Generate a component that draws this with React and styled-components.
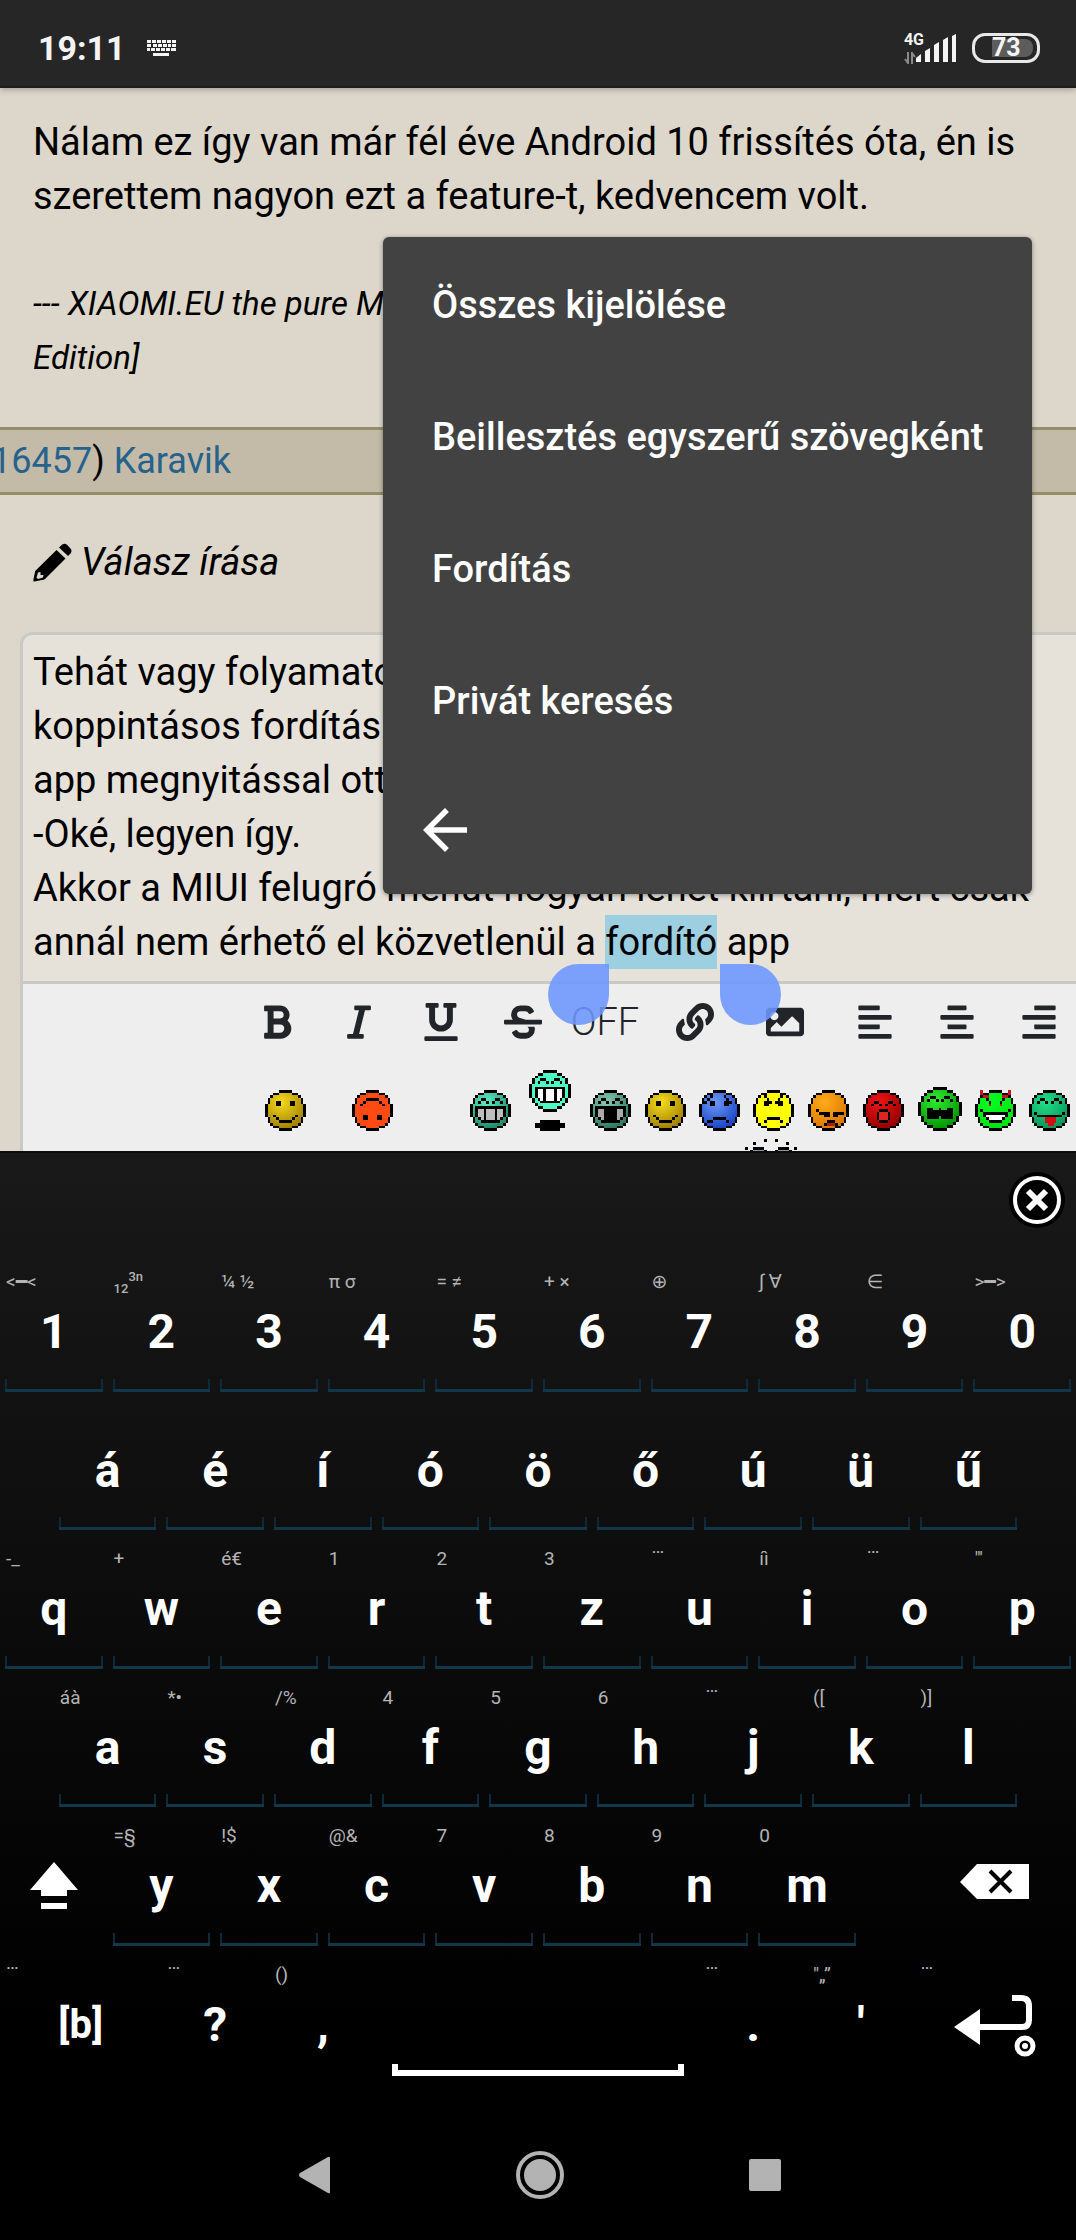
import { useEffect, useRef } from "react"
import styled, { createGlobalStyle } from "styled-components"
import {
  FaAlignCenter,
  FaAlignLeft,
  FaAlignRight,
  FaBold,
  FaImage,
  FaItalic,
  FaLink,
  FaStrikethrough,
  FaUnderline,
} from "react-icons/fa"

const GlobalStyle = createGlobalStyle`
  * {
    box-sizing: border-box;
  }

  body {
    margin: 0;
    background: #000;
    font-family: Roboto, "Noto Sans", "DejaVu Sans", sans-serif;
  }

  button {
    font: inherit;
    color: inherit;
    background: none;
    border: none;
    padding: 0;
  }

  svg {
    display: block;
  }
`

const Screen = styled.div`
  display: flex;
  flex-direction: column;
  min-height: 100vh;
  overflow: hidden;
`

const StatusBar = styled.header`
  display: flex;
  align-items: center;
  justify-content: space-between;
  height: 88px;
  padding: 9px 36px 0 38px;
  color: #f4f4f4;
  background: #262626;
  border-bottom: 2px solid #1c1c1a;
  box-shadow: 0 2px 6px rgba(0, 0, 0, 0.25);
  position: relative;
  z-index: 1;
`

const StatusGroup = styled.div`
  display: flex;
  align-items: center;
  gap: ${({ $gap }) => $gap}px;
`

const Clock = styled.time`
  font-size: 34px;
  font-weight: 700;
  line-height: 40px;
`

const Network = styled.div`
  display: flex;
  flex-direction: column;
  align-items: flex-start;
  gap: 4px;
  margin-right: -8px;
  font-size: 16px;
  font-weight: 700;
  line-height: 16px;
`

const Battery = styled.div`
  display: flex;
  width: 68px;
  height: 30px;
  padding: 3px 4px 3px 17px;
  border: 3px solid #e8e8e8;
  border-radius: 13px;
`

const BatteryLevel = styled.span`
  flex: 1;
  font-size: 25px;
  font-weight: 700;
  line-height: 18px;
  background: #5c5c5c;
  border-radius: 0 8px 8px 0;
`

const Page = styled.main`
  position: relative;
  background: #ddd7cb;
  color: #000;
  font-size: 38px;
  line-height: 54px;
  overflow: hidden;
`

const Post = styled.article`
  padding: 27px 33px 42px;

  p {
    margin: 0;
    white-space: nowrap;
  }
`

const Signature = styled.p`
  padding-top: 54px;
  font-size: 33px;
  font-style: italic;
`

const PostHeader = styled.div`
  padding: 4px 0;
  font-size: 36px;
  text-indent: -9px;
  background: #c3bba7;
  border-top: 3px solid #968d69;
  border-bottom: 3px solid #968d69;

  a {
    color: #27628c;
    text-decoration: none;
  }
`

const ReplyTitle = styled.h2`
  display: flex;
  align-items: center;
  gap: 9px;
  margin: 0;
  padding: 40px 33px 43px;
  font-size: 38px;
  font-style: italic;
  font-weight: 400;
`

const Editor = styled.section`
  position: relative;
  margin: 0 -20px 0 20px;
  background: #e6e2da;
  border: 3px solid #c9c9c5;
  border-bottom: none;
  border-radius: 12px 12px 0 0;
`

const Message = styled.textarea`
  display: block;
  width: 100%;
  padding: 10px 10px 12px;
  font: inherit;
  color: inherit;
  background: none;
  border: none;
  outline: none;
  resize: none;
  overflow: hidden;
  white-space: pre;

  &::selection {
    color: #000;
    background: #9ccfdf;
  }
`

const Handle = styled.span`
  position: absolute;
  z-index: 1;
  top: 329px;
  left: ${({ $left }) => $left}px;
  width: 61px;
  height: 61px;
  background: rgba(108, 150, 255, 0.88);
  border-radius: ${({ $side }) =>
    $side === "start" ? "50% 0 50% 50%" : "0 50% 50% 50%"};
`

const Tools = styled.div`
  height: 170px;
  padding-left: 213px;
  color: #212529;
  background: #eee;
  border-top: 3px solid #c9c9c5;
  overflow: hidden;
`

const Formatting = styled.div`
  display: flex;
  gap: 8px;
  height: 76px;
`

const ToolGroup = styled.div`
  display: flex;
  flex: none;
`

const Tool = styled.button`
  display: flex;
  align-items: center;
  justify-content: center;
  width: 82px;
  font-size: 38px;
`

const OffTool = styled(Tool)`
  font-weight: 300;
`

const Smileys = styled.div`
  display: flex;
  align-items: flex-end;
  height: 71px;
  padding-left: 29px;
`

const SmileyButton = styled.button`
  flex: none;
  margin-left: ${({ $before }) => $before}px;
`

const NextSmileys = styled.div`
  padding: 8px 0 0 509px;
`

const Menu = styled.nav`
  position: absolute;
  top: 149px;
  right: 44px;
  z-index: 2;
  display: flex;
  flex-direction: column;
  width: 649px;
  color: #fff;
  background: #424242;
  border-radius: 6px;
  box-shadow: 0 1px 5px rgba(0, 0, 0, 0.4);
`

const MenuItem = styled.button`
  height: 132px;
  padding: 3px 49px 0;
  font-size: 38px;
  font-weight: 500;
  text-align: left;
  white-space: nowrap;
`

const MenuBack = styled.button`
  height: 129px;
  padding-left: 29px;
`

const Keyboard = styled.section`
  display: flex;
  flex-direction: column;
  padding-bottom: 20px;
  color: #fff;
  background: linear-gradient(#191919, #000 90%);
  border-top: 2px solid #0c0c0c;
`

const KeyboardTop = styled.div`
  display: flex;
  align-items: flex-start;
  justify-content: flex-end;
  height: 106px;
  padding: 19px 11px 0 0;
`

const Rows = styled.div`
  display: grid;
  grid-auto-rows: 1fr;
  height: 831px;
`

// 20 half-key columns, so staggered rows can start on a half key
const Row = styled.div`
  display: grid;
  grid-template-columns: repeat(20, minmax(0, 1fr));
`

const Key = styled.button`
  position: relative;
  grid-column: ${({ $start, $span }) => `${$start} / span ${$span}`};
  display: flex;
  flex-direction: column;
  margin: 0 5px 6px;
  padding: 11px 1px 0;
  border-bottom: 3px solid ${({ $plain }) => ($plain ? "transparent" : "#12374b")};

  &::before {
    content: "";
    position: absolute;
    inset: auto 0 0;
    height: 10px;
    border: solid ${({ $plain }) => ($plain ? "transparent" : "#0d2a3a")};
    border-width: 0 2px;
  }
`

const Hint = styled.span`
  height: 24px;
  margin-bottom: 10px;
  color: #b4b4b4;
  font-size: 19px;
  line-height: 24px;
  text-align: left;
  white-space: nowrap;

  sub,
  sup {
    font-size: 13px;
    font-weight: 500;
    line-height: 0;
  }
`

const Dots = styled.span`
  line-height: 0;
  vertical-align: 12px;
`

const Label = styled.span`
  display: flex;
  align-items: center;
  justify-content: center;
  height: 56px;
  font-size: ${({ $small }) => ($small ? 40 : 48)}px;
  font-weight: 700;
  line-height: 56px;
`

const SpaceMark = styled.span`
  height: 12px;
  margin: auto 9px 5px;
  border: solid #fff;
  border-width: 0 6px;
  background: linear-gradient(#fff, #fff) bottom / 100% 6px no-repeat;
`

const NavBar = styled.nav`
  display: flex;
  flex: 1;
  align-items: center;
  justify-content: center;
  min-height: 129px;
  padding-left: 4px;
  background: #000;
`

const NavButton = styled.button`
  display: flex;
  justify-content: center;
  width: 225px;
`

const message = `Tehát vagy folyamatosan
koppintásos fordítás
app megnyitással ott
-Oké, legyen így.
Akkor a MIUI felugró menüt hogyan lehet kiirtani, mert csak
annál nem érhető el közvetlenül a fordító app`

const menuItems = [
  "Összes kijelölése",
  "Beillesztés egyszerű szövegként",
  "Fordítás",
  "Privát keresés",
]

const dots = <Dots>…</Dots>

const keyRows = [
  {
    start: 1,
    keys: [
      ["1", "<━<"],
      ["2", <><sub>12</sub><sup>3n</sup></>],
      ["3", "¼ ½"],
      ["4", "π σ"],
      ["5", "= ≠"],
      ["6", "+ ×"],
      ["7", "⊕"],
      ["8", "∫ ∀"],
      ["9", "∈"],
      ["0", ">━>"],
    ],
  },
  {
    start: 2,
    keys: [..."áéíóöőúüű"].map((letter) => [letter, ""]),
  },
  {
    start: 1,
    keys: [
      ["q", "-_"],
      ["w", "+"],
      ["e", "é€"],
      ["r", "1"],
      ["t", "2"],
      ["z", "3"],
      ["u", dots],
      ["i", "íì"],
      ["o", dots],
      ["p", "\"'"],
    ],
  },
  {
    start: 2,
    keys: [
      ["a", "áà"],
      ["s", "*•"],
      ["d", "/%"],
      ["f", "4"],
      ["g", "5"],
      ["h", "6"],
      ["j", dots],
      ["k", "(["],
      ["l", ")]"],
    ],
  },
]

const bottomLetters = [
  ["y", "=§"],
  ["x", "!$"],
  ["c", "@&"],
  ["v", "7"],
  ["b", "8"],
  ["n", "9"],
  ["m", "0"],
]

const rects = (list) =>
  list.map(([x, y, w = 1, h = 1]) => `M${x} ${y}h${w}v${h}h${-w}z`).join("")

const DISC =
  "M5 0h5v1h2v1h1v1h1v2h1v5h-1v2h-1v1h-1v1h-2v1h-5v-1h-2v-1h-1v-1h-1v-2h-1v-5h1v-2h1v-1h1v-1h2z"

const RIM = rects([
  [5, 0, 5], [3, 1, 2], [10, 1, 2], [2, 2], [12, 2], [1, 3, 1, 2], [13, 3, 1, 2],
  [0, 5, 1, 5], [14, 5, 1, 5], [1, 10, 1, 2], [13, 10, 1, 2], [2, 12], [12, 12],
  [3, 13, 2], [10, 13, 2], [5, 14, 5],
])

const arches = [[3, 4], [4, 3, 2], [6, 4], [8, 4], [9, 3, 2], [11, 4]]
const eyes = [[4, 4, 2, 2], [9, 4, 2, 2]]
const frown = [[4, 11], [5, 10, 5], [10, 11]]
const grin = [[2, 6, 11], [2, 7, 1, 3], [12, 7, 1, 3], [3, 10], [11, 10], [4, 11, 7], [5, 7, 1, 4], [9, 7, 1, 4]]
const teeth = [[3, 7, 9, 3], [4, 10, 7]]
const smile = [...eyes, [3, 9], [11, 9], [4, 10], [10, 10], [5, 11, 5]]

const smileys = [
  { name: "mosoly", before: 0, from: "#f5dc1c", to: "#9c7a00", marks: smile },
  {
    name: "fejjel lefelé",
    before: 46,
    from: "#ff4a14",
    to: "#ff4a14",
    marks: [[3, 5], [4, 4], [5, 3, 5], [10, 4], [11, 5], [4, 9, 2, 2], [9, 9, 2, 2]],
  },
  {
    name: "vigyor",
    before: 77,
    from: "#5cf0c4",
    to: "#1c8064",
    marks: [...arches, ...grin],
    extras: [["#bdbdbd", teeth]],
  },
  { name: "ugráló", before: 18, jump: true },
  {
    name: "fogatlan",
    before: 19,
    from: "#8cc8b4",
    to: "#24745c",
    marks: [...arches, ...grin, [6, 7, 3, 4]],
    extras: [["#aaa", teeth]],
  },
  { name: "mosoly 2", before: 14, from: "#f5dc1c", to: "#9c7a00", marks: smile },
  {
    name: "szomorú",
    before: 13,
    from: "#6c98f4",
    to: "#1440c4",
    marks: [...eyes, ...frown, [2, 4], [3, 3], [4, 2], [3, 11], [9, 2], [10, 3], [11, 4]],
  },
  {
    name: "mérges",
    before: 13,
    from: "#ff0",
    to: "#ff0",
    marks: [...eyes, ...frown, [4, 2], [5, 3], [6, 4], [10, 2], [9, 3], [8, 4]],
  },
  {
    name: "morcos",
    before: 14,
    from: "#ffac18",
    to: "#d87400",
    marks: [[3, 7], [4, 8, 4], [6, 9, 2], [9, 8, 4], [9, 9, 2], [7, 11, 3], [6, 12], [10, 12]],
    extras: [["#b02000", [[7, 12, 3]]]],
  },
  {
    name: "dühös",
    before: 14,
    from: "#f01414",
    to: "#900000",
    marks: [[3, 5], [4, 4, 2], [6, 5], [8, 5], [9, 4, 2], [11, 5], [6, 7, 3], [5, 8, 1, 3], [9, 8, 1, 3], [6, 11, 3]],
    extras: [["#e02424", [[6, 8, 3, 3]]]],
  },
  {
    name: "ordító",
    before: 14,
    size: 44,
    from: "#30ec30",
    to: "#009000",
    marks: [...arches, [3, 7, 2, 4], [5, 8, 2, 3], [7, 7, 1, 3], [8, 8, 2, 3], [10, 7, 2, 4]],
  },
  {
    name: "ördög",
    before: 13,
    from: "#0f2",
    to: "#00e010",
    marks: [[2, 7], [3, 8, 9], [12, 7], [3, 9], [11, 9], [4, 10], [10, 10], [5, 11, 5], [4, 3], [5, 4], [10, 3], [9, 4]],
    extras: [
      ["#fff", [[4, 9, 7], [5, 10, 5]]],
      ["#c81428", [[2, 0, 1, 3], [3, 2, 2, 1], [12, 0, 1, 3], [10, 2, 2, 1], [5, 5, 1, 1], [9, 5, 1, 1]]],
    ],
  },
  {
    name: "nyelvnyújtó",
    before: 13,
    from: "#20e088",
    to: "#089058",
    marks: [...arches, [2, 8], [3, 9, 9], [12, 8]],
    extras: [["#d01010", [[6, 10, 4, 2], [7, 12, 2]]]],
  },
]

function Face({ smiley, id }) {
  const { from, to, marks, extras = [] } = smiley
  return (
    <>
      <radialGradient id={id} cx="0.4" cy="0.3" r="0.7">
        <stop offset="0" stopColor={from} />
        <stop offset="1" stopColor={to} />
      </radialGradient>
      <path d={DISC} fill={`url(#${id})`} />
      {extras.map(([fill, list]) => (
        <path key={fill} d={rects(list)} fill={fill} />
      ))}
      <path d={RIM + rects(marks)} />
    </>
  )
}

function Smiley({ smiley, id }) {
  if (smiley.jump) {
    const face = {
      from: "#4dfcc4",
      to: "#4dfcc4",
      marks: [...arches, ...grin],
      extras: [["#fff", teeth]],
    }
    return (
      <svg width="42" height="61" viewBox="0 0 15 22" shapeRendering="crispEdges">
        <Face smiley={face} id={id} />
        <path d="M4 18h7v1h2v2h-2v1h-7v-1h-2v-2h2z" />
      </svg>
    )
  }
  const size = smiley.size || 41
  return (
    <svg width={size} height={size} viewBox="0 0 15 15" shapeRendering="crispEdges">
      <Face smiley={smiley} id={id} />
    </svg>
  )
}

function KeyboardIcon() {
  return (
    <svg width="30" height="18" viewBox="0 0 30 18" fill="#f4f4f4">
      <path d="M0 1h4v3h-4zM5 1h4v3h-4zM10 1h4v3h-4zM15 1h4v3h-4zM20 1h4v3h-4zM25 1h4v3h-4zM0 5h4v3h-4zM6 5h4v3h-4zM11 5h4v3h-4zM16 5h4v3h-4zM21 5h3v3h-3zM25 5h4v3h-4zM0 9h3v3h-3zM4 9h4v3h-4zM9 9h4v3h-4zM14 9h4v3h-4zM19 9h4v3h-4zM24 9h5v3h-5zM6 14h16v3h-16z" />
    </svg>
  )
}

function PencilIcon() {
  return (
    <svg width="39" height="39" viewBox="0 0 39 39">
      <path d="M26 4.500L29 1.800q2.500-2 5 0L37.500 5.500q2 2.500 0 5L35 13z" />
      <path
        fillRule="evenodd"
        d="M23.500 7L32.500 15.500L11.500 36.500L1.500 38.500q-1.500 0-1.200-1.500L2.200 28zM5 29.500L3.500 34.500l1.500 1.500 5-1.500.5-2.500h-3v-3z"
      />
    </svg>
  )
}

function LetterKey({ label, hint, start }) {
  return (
    <Key $start={start} $span={2}>
      <Hint>{hint}</Hint>
      <Label>{label}</Label>
    </Key>
  )
}

export default function App() {
  const messageRef = useRef(null)

  useEffect(() => {
    const start = message.indexOf("fordító")
    messageRef.current.focus({ preventScroll: true })
    messageRef.current.setSelectionRange(start, start + "fordító".length)
  }, [])

  return (
    <Screen>
      <GlobalStyle />
      <StatusBar>
        <StatusGroup $gap={21}>
          <Clock>19:11</Clock>
          <KeyboardIcon />
        </StatusGroup>
        <StatusGroup $gap={15}>
          <StatusGroup $gap={0}>
            <Network>
              4G
              <svg width="12" height="12" viewBox="0 0 12 12" fill="none" stroke="#8a8a8a" strokeWidth="2">
                <path d="M4 0v11L1 7M8 12V1l3 4" />
              </svg>
            </Network>
            <svg width="41" height="30" viewBox="0 0 41 30" fill="#f4f4f4">
              <path d="M0 29v-4l5-4v8zM9 29V18l5-3v14zM18 29V12l5-3v20zM27 29V7l5-3v25zM36 29V3l4-2v28z" />
            </svg>
          </StatusGroup>
          <Battery>
            <BatteryLevel>73</BatteryLevel>
          </Battery>
        </StatusGroup>
      </StatusBar>

      <Page>
        <Post>
          <p>Nálam ez így van már fél éve Android 10 frissítés óta, én is</p>
          <p>szerettem nagyon ezt a feature-t, kedvencem volt.</p>
          <Signature>
            --- XIAOMI.EU the pure MIUI
            <br />
            Edition]
          </Signature>
        </Post>
        <PostHeader>
          <a href="#16457">16457</a>) <a href="#karavik">Karavik</a>
        </PostHeader>
        <ReplyTitle>
          <PencilIcon />
          Válasz írása
        </ReplyTitle>

        <Editor>
          <Message
            ref={messageRef}
            rows={6}
            defaultValue={message}
            aria-label="Válasz írása"
            spellCheck={false}
          />
          <Handle $side="start" $left={525} />
          <Handle $side="end" $left={697} />
          <Tools>
            <Formatting>
              <ToolGroup>
                <Tool aria-label="Félkövér"><FaBold /></Tool>
                <Tool aria-label="Dőlt"><FaItalic /></Tool>
                <Tool aria-label="Aláhúzott"><FaUnderline /></Tool>
                <Tool aria-label="Áthúzott"><FaStrikethrough /></Tool>
                <OffTool>OFF</OffTool>
              </ToolGroup>
              <Tool aria-label="Link"><FaLink /></Tool>
              <Tool aria-label="Kép"><FaImage /></Tool>
              <ToolGroup>
                <Tool aria-label="Balra"><FaAlignLeft /></Tool>
                <Tool aria-label="Középre"><FaAlignCenter /></Tool>
                <Tool aria-label="Jobbra"><FaAlignRight /></Tool>
              </ToolGroup>
            </Formatting>
            <Smileys>
              {smileys.map((smiley, i) => (
                <SmileyButton key={smiley.name} $before={smiley.before} aria-label={smiley.name}>
                  <Smiley smiley={smiley} id={`smiley-${i}`} />
                </SmileyButton>
              ))}
            </Smileys>
            <NextSmileys>
              <svg width="52" height="14" viewBox="0 0 19 5" shapeRendering="crispEdges">
                <path fill="#7f9aa8" d="M3 4h4v1h-4zM12 4h4v1h-4z" />
                <path d={rects([[0, 3], [3, 1], [7, 0], [11, 0], [15, 1], [18, 3], [3, 3, 4], [12, 3, 4], [2, 4], [7, 4], [11, 4], [16, 4]])} />
              </svg>
            </NextSmileys>
          </Tools>
        </Editor>

        <Menu>
          {menuItems.map((item) => (
            <MenuItem key={item}>{item}</MenuItem>
          ))}
          <MenuBack aria-label="Vissza">
            <svg width="66" height="66" viewBox="0 0 24 24" fill="#fff">
              <path d="M20 11H7.83l5.59-5.59L12 4l-8 8 8 8 1.41-1.41L7.83 13H20z" />
            </svg>
          </MenuBack>
        </Menu>
      </Page>

      <Keyboard>
        <KeyboardTop>
          <button aria-label="Bezárás">
            <svg width="56" height="56" viewBox="0 0 56 56" fill="none" stroke="#fff">
              <circle cx="28" cy="28" r="28" fill="#000" stroke="none" />
              <circle cx="28" cy="28" r="22" strokeWidth="4" />
              <path d="M19 19l18 18M37 19L19 37" strokeWidth="6" />
            </svg>
          </button>
        </KeyboardTop>
        <Rows>
          {keyRows.map(({ start, keys }, i) => (
            <Row key={i}>
              {keys.map(([label, hint], n) => (
                <LetterKey key={label} label={label} hint={hint} start={start + n * 2} />
              ))}
            </Row>
          ))}
          <Row>
            <Key $start={1} $span={2} $plain aria-label="Shift">
              <Hint />
              <Label>
                <svg width="48" height="48" viewBox="0 0 48 48" fill="#fff">
                  <path d="M24 0l24 28H37v6H11v-6H0zM11 41h26v6H11z" />
                </svg>
              </Label>
            </Key>
            {bottomLetters.map(([label, hint], n) => (
              <LetterKey key={label} label={label} hint={hint} start={3 + n * 2} />
            ))}
            <Key $start={18} $span={3} $plain aria-label="Törlés">
              <Hint />
              <Label>
                <svg width="70" height="44" viewBox="0 0 70 44">
                  <path d="M0 18L17 0h52v35H17z" fill="#fff" />
                  <path d="M30 7l21 21M51 7L30 28" stroke="#000" strokeWidth="4" />
                </svg>
              </Label>
            </Key>
          </Row>
          <Row>
            <Key $start={1} $span={3} $plain>
              <Hint>{dots}</Hint>
              <Label $small>[b]</Label>
            </Key>
            <Key $start={4} $span={2} $plain>
              <Hint>{dots}</Hint>
              <Label>?</Label>
            </Key>
            <Key $start={6} $span={2} $plain>
              <Hint>()</Hint>
              <Label>,</Label>
            </Key>
            <Key $start={8} $span={6} $plain aria-label="Szóköz">
              <SpaceMark />
            </Key>
            <Key $start={14} $span={2} $plain>
              <Hint>{dots}</Hint>
              <Label>.</Label>
            </Key>
            <Key $start={16} $span={2} $plain>
              <Hint>"„”</Hint>
              <Label>'</Label>
            </Key>
            <Key $start={18} $span={3} $plain aria-label="Enter">
              <Hint>{dots}</Hint>
              <Label>
                <svg width="84" height="64" viewBox="0 0 84 64" fill="none" stroke="#fff">
                  <path d="M1 34l26-18v36z" fill="#fff" stroke="none" />
                  <path d="M26 34h43q7 0 7-7V13q0-8-8-8H59" strokeWidth="6" />
                  <circle cx="72" cy="53" r="8" strokeWidth="5" />
                  <circle cx="72" cy="53" r="3" fill="#fff" stroke="none" />
                </svg>
              </Label>
            </Key>
          </Row>
        </Rows>
      </Keyboard>

      <NavBar>
        <NavButton aria-label="Vissza">
          <svg width="32" height="38" viewBox="0 0 32 38" fill="#b3b3b3">
            <path d="M1 17L29 1q2-1 2 1v34q0 2-2 1L1 21q-2-2 0-4z" />
          </svg>
        </NavButton>
        <NavButton aria-label="Kezdőképernyő">
          <svg width="50" height="50" viewBox="0 0 50 50">
            <circle cx="25" cy="25" r="22" fill="none" stroke="#b3b3b3" strokeWidth="4" />
            <circle cx="25" cy="25" r="16" fill="#b3b3b3" />
          </svg>
        </NavButton>
        <NavButton aria-label="Legutóbbiak">
          <svg width="32" height="32" viewBox="0 0 32 32">
            <rect width="32" height="32" rx="2" fill="#b3b3b3" />
          </svg>
        </NavButton>
      </NavBar>
    </Screen>
  )
}
